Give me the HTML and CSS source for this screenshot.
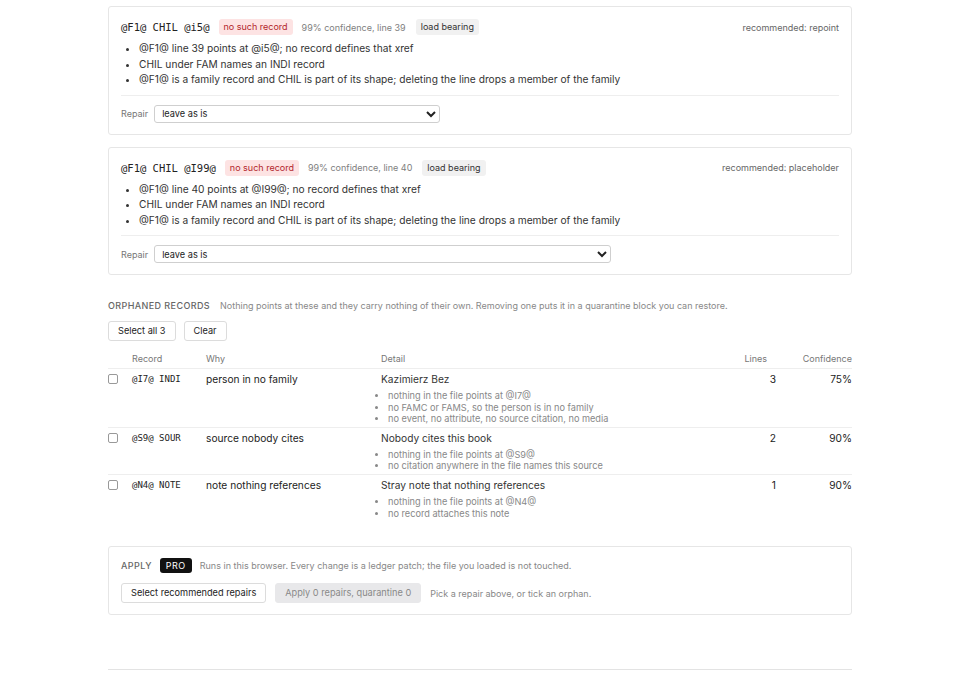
FILE: index.html
```html
<!DOCTYPE html>
<html>
<head>
<meta charset="utf-8">
<link rel="stylesheet" href="styles.css">
</head>
<body>
<div class="page">
  <div class="card issue">
    <div class="issue-head">
      <span class="code">@F1@ CHIL @i5@</span>
      <span class="badge bad">no such record</span>
      <span class="meta">99% confidence, line 39</span>
      <span class="badge tag">load bearing</span>
      <span class="rec">recommended: repoint</span>
    </div>
    <ul class="reasons">
      <li>@F1@ line 39 points at @i5@; no record defines that xref</li>
      <li>CHIL under FAM names an INDI record</li>
      <li>@F1@ is a family record and CHIL is part of its shape; deleting the line drops a member of the family</li>
    </ul>
    <div class="repair">
      <span class="lbl">Repair</span>
      <select class="sel sel-a"><option>leave as is</option></select>
    </div>
  </div>

  <div class="card issue">
    <div class="issue-head">
      <span class="code">@F1@ CHIL @I99@</span>
      <span class="badge bad">no such record</span>
      <span class="meta">99% confidence, line 40</span>
      <span class="badge tag">load bearing</span>
      <span class="rec">recommended: placeholder</span>
    </div>
    <ul class="reasons">
      <li>@F1@ line 40 points at @I99@; no record defines that xref</li>
      <li>CHIL under FAM names an INDI record</li>
      <li>@F1@ is a family record and CHIL is part of its shape; deleting the line drops a member of the family</li>
    </ul>
    <div class="repair">
      <span class="lbl">Repair</span>
      <select class="sel sel-b"><option>leave as is</option></select>
    </div>
  </div>

  <section class="orphans">
    <div class="sec-head">
      <span class="sec-title">Orphaned records</span>
      <span class="sec-desc">Nothing points at these and they carry nothing of their own. Removing one puts it in a quarantine block you can restore.</span>
    </div>
    <div class="btns">
      <button class="btn">Select all 3</button>
      <button class="btn">Clear</button>
    </div>
    <table class="tbl">
      <thead>
        <tr>
          <th class="c-chk"></th>
          <th class="c-rec">Record</th>
          <th class="c-why">Why</th>
          <th class="c-det">Detail</th>
          <th class="c-num">Lines</th>
          <th class="c-conf">Confidence</th>
        </tr>
      </thead>
      <tbody>
        <tr>
          <td class="c-chk"><span class="chk"></span></td>
          <td class="c-rec mono">@I7@ INDI</td>
          <td class="c-why">person in no family</td>
          <td class="c-det">
            <div class="det-title">Kazimierz Bez</div>
            <ul class="det-list">
              <li>nothing in the file points at @I7@</li>
              <li>no FAMC or FAMS, so the person is in no family</li>
              <li>no event, no attribute, no source citation, no media</li>
            </ul>
          </td>
          <td class="c-num">3</td>
          <td class="c-conf">75%</td>
        </tr>
        <tr>
          <td class="c-chk"><span class="chk"></span></td>
          <td class="c-rec mono">@S9@ SOUR</td>
          <td class="c-why">source nobody cites</td>
          <td class="c-det">
            <div class="det-title">Nobody cites this book</div>
            <ul class="det-list">
              <li>nothing in the file points at @S9@</li>
              <li>no citation anywhere in the file names this source</li>
            </ul>
          </td>
          <td class="c-num">2</td>
          <td class="c-conf">90%</td>
        </tr>
        <tr>
          <td class="c-chk"><span class="chk"></span></td>
          <td class="c-rec mono">@N4@ NOTE</td>
          <td class="c-why">note nothing references</td>
          <td class="c-det">
            <div class="det-title">Stray note that nothing references</div>
            <ul class="det-list">
              <li>nothing in the file points at @N4@</li>
              <li>no record attaches this note</li>
            </ul>
          </td>
          <td class="c-num">1</td>
          <td class="c-conf">90%</td>
        </tr>
      </tbody>
    </table>
  </section>

  <div class="card apply">
    <div class="apply-head">
      <span class="sec-title">Apply</span>
      <span class="pro">PRO</span>
      <span class="sec-desc">Runs in this browser. Every change is a ledger patch; the file you loaded is not touched.</span>
    </div>
    <div class="apply-row">
      <button class="btn">Select recommended repairs</button>
      <button class="btn disabled">Apply 0 repairs, quarantine 0</button>
      <span class="hint">Pick a repair above, or tick an orphan.</span>
    </div>
  </div>

  <div class="foot"></div>
</div>
</body>
</html>
```

FILE: styles.css
```css
* { box-sizing: border-box; }
html, body { margin: 0; padding: 0; background: #fff; }
body {
  font-family: Inter, "Noto Sans", "Liberation Sans", sans-serif;
  color: #222;
  font-size: 10px;
}
.page {
  width: 744px;
  margin-left: 108px;
  padding-top: 6px;
  display: flex;
  flex-direction: column;
}
.card {
  border: 1px solid #e6e6e6;
  border-radius: 3px;
  background: #fff;
}
.issue {
  padding: 11px 12px 11px 12px;
  margin-bottom: 12px;
}
.issue-head {
  display: flex;
  align-items: center;
  height: 18px;
}
.code {
  font-family: "DejaVu Sans Mono", "Liberation Mono", monospace;
  font-size: 10.5px;
  color: #222;
  margin-right: 9px;
}
.badge {
  font-size: 9px;
  padding: 2px 5px;
  border-radius: 3px;
  line-height: 12px;
}
.bad { background: #fde3e3; color: #b3262b; }
.tag { background: #f1f1f1; color: #333; }
.meta { font-size: 9px; color: #808080; margin: 0 10px 0 9px; }
.rec { margin-left: auto; font-size: 9px; color: #666; }
.reasons {
  margin: 5px 0 0 0;
  padding: 0 0 0 18px;
  font-size: 10.2px;
  line-height: 15.5px;
  color: #333;
}
.repair {
  margin-top: 7px;
  border-top: 1px solid #eee;
  padding-top: 9px;
  display: flex;
  align-items: center;
}
.lbl { font-size: 9px; color: #777; margin-right: 6px; }
.sel {
  height: 18px;
  font-family: inherit;
  font-size: 9.2px;
  color: #222;
  border: 1px solid #cfcfcf;
  border-radius: 3px;
  background: #fff;
  padding: 0 3px;
}
.sel-a { width: 286px; }
.sel-b { width: 457px; }

.orphans { margin-top: 12px; }
.sec-head { display: flex; align-items: baseline; gap: 10px; line-height: 14px; }
.sec-title {
  text-transform: uppercase;
  font-size: 9px;
  letter-spacing: 0.4px;
  color: #666;
  font-weight: 500;
}
.sec-desc { font-size: 9px; color: #888; }
.btns { display: flex; gap: 8px; margin-top: 8px; }
.btn {
  font-family: inherit;
  font-size: 9.2px;
  line-height: 12px;
  color: #222;
  background: #fff;
  border: 1px solid #dcdcdc;
  border-radius: 3px;
  height: 20px;
  padding: 0 9px;
}
.btn.disabled { background: #e8e8ea; border-color: #e8e8ea; color: #888; }

.tbl {
  width: 100%;
  border-collapse: collapse;
  margin-top: 12px;
}
.tbl th {
  font-weight: normal;
  font-size: 9px;
  line-height: 12px;
  color: #777;
  text-align: left;
  padding: 0 0 3px 0;
  border-bottom: 1px solid #eee;
}
.tbl td {
  vertical-align: top;
  padding: 4px 0 2px 0;
  border-bottom: 1px solid #eee;
  font-size: 10.2px;
  line-height: 13px;
  color: #222;
}
.tbl tbody tr:last-child td { border-bottom: none; }
.c-chk { width: 24px; }
.c-rec { width: 74px; }
.c-why { width: 175px; }
.c-num { width: 40px; text-align: right !important; }
.tbl th.c-num { padding-right: 9px; }
.c-conf { width: 76px; text-align: right !important; }
.mono { font-family: "DejaVu Sans Mono", "Liberation Mono", monospace; font-size: 9px !important; }
.chk {
  display: inline-block;
  width: 10px;
  height: 10px;
  border: 1px solid #999;
  border-radius: 2px;
  margin-top: 1px;
}
.det-title { color: #333; }
.det-list {
  margin: 4px 0 0 0;
  padding-left: 7px;
  font-size: 9.2px;
  line-height: 11.6px;
  color: #888;
}

.apply { margin-top: 25px; padding: 10px 12px 11px 12px; }
.apply-head { display: flex; align-items: center; gap: 8px; height: 16px; }
.pro {
  background: #111;
  color: #fff;
  font-size: 9px;
  line-height: 12px;
  border-radius: 3px;
  padding: 2px 6px 1px;
  letter-spacing: 0.5px;
}
.apply-row { display: flex; align-items: center; gap: 9px; margin-top: 10px; }
.hint { font-size: 9px; color: #888; }
.foot { margin-top: 54px; border-top: 1px solid #e3e3e3; }
```
